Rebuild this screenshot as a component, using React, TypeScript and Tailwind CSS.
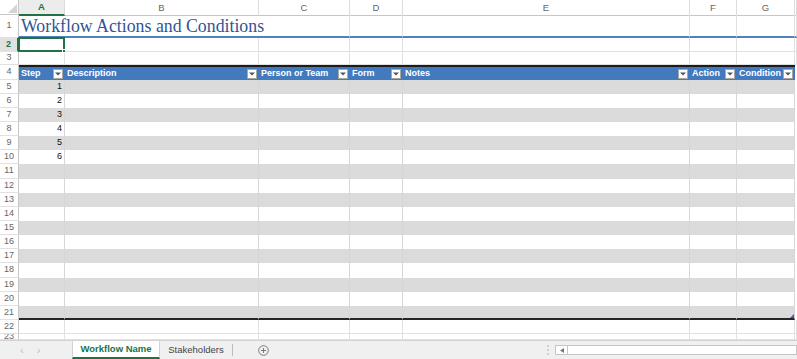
import React from 'react';

const GRID = 'grid grid-cols-[46px_194px_91px_53px_287px_47px_58px_1fr] flex-1';

const letters = ['A', 'B', 'C', 'D', 'E', 'F', 'G', ''];
const heads = ['Step', 'Description', 'Person or Team', 'Form', 'Notes', 'Action', 'Condition'];

function RowLabel({ label, sel }: { label: string; sel?: boolean }) {
  return (
    <div
      className={`w-[19px] shrink-0 flex items-center justify-center text-[9px] border-b border-b-[#e1e1e1] ${
        sel
          ? 'text-[#217346] font-bold bg-[#e1e1e1] border-r-2 border-r-[#217346]'
          : 'text-[#666] border-r border-r-[#c6c6c6]'
      }`}
    >
      {label}
    </div>
  );
}

function Drop() {
  return (
    <span className="w-[10px] h-[10px] bg-white border border-[#a6a6a6] flex items-center justify-center mr-[2px] shrink-0">
      <svg width="6" height="4" viewBox="0 0 6 4">
        <path d="M0 0.5h6L3 3.5z" fill="#555" />
      </svg>
    </span>
  );
}

function PlainRow({ label, h }: { label: string; h: string }) {
  return (
    <div className={`flex ${h} overflow-hidden`}>
      <RowLabel label={label} />
      <div className={GRID}>
        {letters.map((l) => (
          <div key={l} className="border-r border-b border-[#e1e1e1]" />
        ))}
      </div>
    </div>
  );
}

function DataRow({ n, h, last }: { n: number; h: string; last?: boolean }) {
  const gray = n % 2 === 1;
  const step = n >= 5 && n <= 10 ? String(n - 4) : '';
  return (
    <div className={`flex ${h}`}>
      <RowLabel label={String(n)} />
      <div className={GRID}>
        {letters.map((l, i) =>
          i < 7 ? (
            <div
              key={l}
              className={`relative border-r border-r-[#d6d6d6] flex items-center justify-end pr-[2px] text-[9px] text-[#111] ${
                gray ? 'bg-[#dbdbdb]' : 'bg-white'
              } ${last ? 'border-b-2 border-b-[#262626]' : ''}`}
            >
              {i === 0 ? step : ''}
              {last && i === 6 && (
                <svg className="absolute right-0 bottom-0" width="4" height="4" viewBox="0 0 4 4">
                  <path d="M4 0v4H0z" fill="#3b5fb0" />
                </svg>
              )}
            </div>
          ) : (
            <div key="x" className="bg-white" />
          )
        )}
      </div>
    </div>
  );
}

export default function App() {
  const dataRows = Array.from({ length: 17 }, (_, i) => i + 5);
  return (
    <div className="w-[797px] h-[359px] overflow-hidden bg-white font-['Liberation_Sans',Arial,sans-serif] flex flex-col">
      {/* column letters */}
      <div className="flex h-[15px] shrink-0">
        <div className="w-[19px] shrink-0 border-r border-b border-[#c6c6c6] flex items-end justify-end">
          <svg width="12" height="11" viewBox="0 0 12 11">
            <path d="M11 1v9H2z" fill="#d4d4d4" />
          </svg>
        </div>
        <div className={GRID}>
          {letters.map((l) => (
            <div
              key={l}
              className={`flex items-center justify-center text-[9.5px] border-r border-r-[#dcdcdc] ${
                l === 'A'
                  ? 'text-[#217346] font-bold bg-[#ececec] border-b-2 border-b-[#217346]'
                  : 'text-[#666] border-b border-b-[#c6c6c6]'
              }`}
            >
              {l}
            </div>
          ))}
        </div>
      </div>

      {/* row 1: title */}
      <div className="flex h-[23px] shrink-0">
        <RowLabel label="1" />
        <div className={GRID}>
          {letters.map((l, i) => (
            <div
              key={l}
              className={`border-b-2 border-b-[#4f81bd] ${i > 1 ? 'border-r border-r-[#e1e1e1]' : ''}`}
            >
              {i === 0 && (
                <span className="block whitespace-nowrap pl-[2px] pt-[2px] text-[17.8px] leading-[18px] text-[#2f5496] font-['Liberation_Serif',serif]">
                  Workflow Actions and Conditions
                </span>
              )}
            </div>
          ))}
        </div>
      </div>

      {/* row 2: selected A2 */}
      <div className="flex h-[14px] shrink-0">
        <RowLabel label="2" sel />
        <div className={GRID}>
          {letters.map((l, i) => (
            <div key={l} className="relative border-r border-b border-[#e1e1e1]">
              {i === 0 && (
                <div className="absolute -left-px -top-px -right-px -bottom-px border-2 border-[#217346]">
                  <span className="absolute -right-[3px] -bottom-[3px] w-[4px] h-[4px] bg-[#217346] border border-white" />
                </div>
              )}
            </div>
          ))}
        </div>
      </div>

      <PlainRow label="3" h="h-[13px] shrink-0" />

      {/* row 4: table header */}
      <div className="flex h-[15px] shrink-0">
        <RowLabel label="4" />
        <div className={GRID}>
          {heads.map((t) => (
            <div
              key={t}
              className="bg-[#4379bd] border-y-2 border-[#1c1c1c] flex items-center justify-between pl-[2px] text-[9px] font-bold text-white whitespace-nowrap"
            >
              <span>{t}</span>
              <Drop />
            </div>
          ))}
          <div className="bg-white" />
        </div>
      </div>

      {dataRows.map((n) => (
        <DataRow
          key={n}
          n={n}
          h={n === 11 || n === 18 ? 'h-[15px] shrink-0' : 'h-[14px] shrink-0'}
          last={n === 21}
        />
      ))}

      <PlainRow label="22" h="h-[14px] shrink-0" />
      <PlainRow label="23" h="h-[6px] shrink-0" />

      {/* sheet tabs */}
      <div className="flex h-[19px] shrink-0 bg-[#f0f0f0] border-t border-[#d2d2d2] text-[9.5px]">
        <div className="w-[72px] flex items-center gap-[13px] pl-[20px] text-[#bdbdbd] text-[11px]">
          <span>‹</span>
          <span>›</span>
        </div>
        <div className="w-[88px] bg-white border-x border-[#d2d2d2] border-b-2 border-b-[#217346] flex items-center justify-center font-bold text-[#217346]">
          Workflow Name
        </div>
        <div className="w-[72px] flex items-center justify-center text-[#444]">Stakeholders</div>
        <div className="w-px my-[3px] bg-[#bcbcbc]" />
        <div className="w-[60px] flex items-center justify-center">
          <svg width="11" height="11" viewBox="0 0 11 11">
            <circle cx="5.5" cy="5.5" r="4.8" fill="none" stroke="#7a7a7a" strokeWidth="1" />
            <path d="M5.5 3v5M3 5.5h5" stroke="#7a7a7a" strokeWidth="1" />
          </svg>
        </div>
        <div className="flex-1" />
        <div className="w-[14px] flex items-center justify-center">
          <svg width="2" height="10" viewBox="0 0 2 10">
            <path d="M1 0v2M1 4v2M1 8v2" stroke="#b0b0b0" strokeWidth="1" />
          </svg>
        </div>
        <div className="w-[242px] my-[4px] bg-white border border-[#c6c6c6] flex">
          <div className="w-[12px] border-r border-[#c6c6c6] flex items-center justify-center">
            <svg width="4" height="5" viewBox="0 0 4 5">
              <path d="M4 0v5L0 2.5z" fill="#777" />
            </svg>
          </div>
        </div>
      </div>
    </div>
  );
}
